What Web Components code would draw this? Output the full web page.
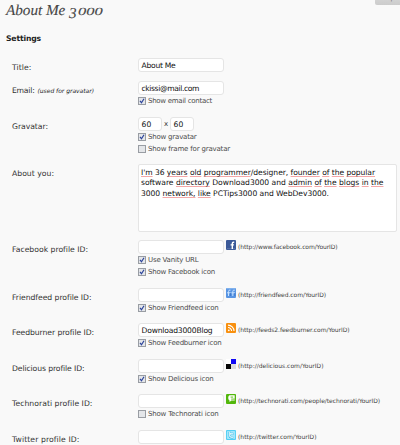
<!DOCTYPE html>
<html lang="en"><head><meta charset="utf-8"><title>About Me 3000</title>
<style>html,body{margin:0;background:#f9f9f9}body{width:400px;height:445px;overflow:hidden;font-family:"DejaVu Sans",sans-serif;color:#333;text-rendering:geometricPrecision}</style></head>
<body><settings-page></settings-page>
<script>
const define=(name,html,init)=>customElements.define(name,class extends HTMLElement{
 connectedCallback(){if(this.shadowRoot)return;const t=document.createElement('template');t.innerHTML=html;
 this.attachShadow({mode:'open'}).append(t.content.cloneNode(true));if(init)init(this,this.shadowRoot);}
});
// A single line of text whose letter spacing is adjusted to fill the width in "w".
define('fit-text','<style>:host{display:inline-block;white-space:pre}span{display:inline-block}</style><span><slot></slot></span>',(el,r)=>{
 const s=r.querySelector('span'),w=parseFloat(el.getAttribute('w'));
 el.style.width=w+'px';
 s.style.letterSpacing=((w-s.getBoundingClientRect().width)/el.textContent.length)+'px';
});
define('form-row',`<style>:host{display:flex;box-sizing:border-box;padding-left:12px}
.label{width:126px;flex:none;font-size:7.7px;line-height:20px;height:20px;white-space:nowrap;color:#333}
.body{flex:1;min-width:0}</style><div class="label"><slot name="label"></slot></div><div class="body"><slot></slot></div>`,el=>{el.style.height=el.getAttribute('h')+'px'});
define('text-box',`<style>:host{display:block;box-sizing:border-box;width:86px;height:14px;border:1px solid #e5e5e5;border-radius:3px;background:#fff;font-size:7.6px;line-height:13px;padding-left:2.5px;white-space:nowrap;color:#111;flex:none}
:host([small]){width:24px}:host([area]){width:259px;height:68px;padding:3px 0 0 2px;border-radius:2px;line-height:10.3px}</style><slot></slot>`);
define('check-box',`<style>:host{display:flex;align-items:center;height:12px;font-size:7px;color:#4c4c4c}svg{width:8px;height:8px;margin-right:2px;flex:none}path{display:none}:host([checked]) path{display:block}
fit-text{line-height:12px}</style><svg viewBox="0 0 8 8"><rect x=".5" y=".5" width="7" height="7" fill="#e4e6e9" stroke="#999da3"/><path d="M2 3.8 3.5 5.8 6 1.8" fill="none" stroke="#2c449b" stroke-width="1.2"/></svg><fit-text></fit-text>`,(el,r)=>{
 const old=r.querySelector('fit-text'),f=document.createElement('fit-text');f.setAttribute('w',el.getAttribute('w'));f.textContent=el.getAttribute('text');old.replaceWith(f);});
const icons={
facebook:'<rect width="10" height="10" rx="1" fill="#3b5998"/><path d="M1 8.6h8" stroke="#627aad" stroke-width=".8"/><path d="M8.2 2.2H7.5Q6.3 2.2 6.3 3.5V9M4.6 4.9h3.3" fill="none" stroke="#fff" stroke-width="1.4"/>',
friendfeed:'<rect width="10" height="10" rx="1" fill="#5995e3"/><path d="M.6.7h8.8" stroke="#8bb9ef"/><path d="M4.5 2.2Q2.5 1.6 2.5 3.5V8M1 4.8h3.7M8.8 2.2Q6.8 1.6 6.8 3.5V8M5.3 4.8h3.6" fill="none" stroke="#c7e2ff"/><path d="M4.5 5v3M8.8 5v3" stroke="#2e6ac0" stroke-width=".6"/>',
feed:'<rect width="10" height="10" rx="1" fill="#f8900f"/><circle cx="2.8" cy="7.3" r=".9" fill="#fff"/><path d="M2 4.5A3.6 3.6 0 0 1 5.6 8.1M2 2.1A6 6 0 0 1 8 8.1" fill="none" stroke="#fff" stroke-width="1.1"/>',
delicious:'<rect width="10" height="10" fill="#fff"/><path d="M5 0h5v5H5z" fill="#1008f4"/><path d="M0 5h5v5H0z" fill="#080808"/><path d="M5 5h5v5H5z" fill="#ddd"/>',
technorati:'<rect width="10" height="10" rx="1" fill="#52b70c"/><path d="M3.4 1.2H8.7V6.6H5.4L3.5 8V6.4Q2.2 5.8 2.2 3.9 2.2 2 3.4 1.2" fill="#fff"/><path d="M4.6 3.1h2.6M5.2 5.1h3.6" fill="none" stroke="#52b70c" stroke-width=".9"/>',
twitter:'<rect width="10" height="10" rx="1" fill="#51cef4"/><rect x=".9" y=".9" width="8.2" height="8.2" rx="1" fill="#a3e7fb"/><path d="M3.8 1.7V6Q3.8 7.6 7.2 7.2M3.8 3.9h3.6" fill="none" stroke="#2bb7e5" stroke-width="2.4"/><path d="M3.8 1.8V6Q3.8 7.3 7.1 7.1M3.8 3.9h3.4" fill="none" stroke="#fff" stroke-width="1.1"/>'};
define('site-icon','<style>:host{display:block;width:10px;height:10px;flex:none}svg{display:block;width:10px;height:10px}</style><svg viewBox="0 0 10 10"></svg>',(el,r)=>{r.querySelector('svg').innerHTML=icons[el.getAttribute('name')]});
const ft=(t,w)=>`<fit-text w="${w}">${t}</fit-text>`;
const label=(t,w)=>`<span slot="label">${ft(t,w)}</span>`;
const chk=(t,w,on=1)=>`<check-box ${on?'checked':''} w="${w}" text="${t}"></check-box>`;
const site=(name,w,h,icon,url,uw,checks,val='')=>`<form-row h="${h}">${label(name+' profile ID:',w)}<div class="line"><text-box>${val}</text-box><site-icon name="${icon}"></site-icon><span class="url">${ft('(http://'+url+')',uw)}</span></div>${checks}</form-row>`;
define('settings-page',`<style>
:host{display:block;position:relative;width:400px;height:445px;overflow:hidden;background:#f9f9f9}
h1{margin:0;padding:1px 0 0 6px;height:19px;font:italic 15.2px/19px "Liberation Serif",serif;color:#464646;white-space:nowrap;display:flex;-webkit-text-stroke:.1px #464646}
/* Old-style figures: the 3 descends below the baseline, the zeros stay at x-height. */
.three{display:inline-block;width:8.5px;padding-top:3px;line-height:19px}
.zeros{display:inline-block;font-size:11px;transform:scaleX(1.5);transform-origin:0 0;line-height:22px}
h2{margin:0;padding:10px 0 0 6px;height:28px;font:bold 7.7px/17px "DejaVu Sans",sans-serif;color:#222}
.line{display:flex;height:14px}.line site-icon{margin:0 0 0 2px}.url{font-size:6px;line-height:16px;color:#444;margin-left:2px}
.small{font-size:6px;font-weight:500;font-style:italic;margin-left:3px;color:#222}
.x{width:8px;text-align:center;font-size:7px;line-height:15px}
u{text-decoration:underline;text-decoration-color:#f4a8a8;text-decoration-thickness:1px;text-underline-offset:1px;text-decoration-skip-ink:none}
.area fit-text{display:block}.help{position:absolute;left:375px;top:-10px;width:32px;height:15px;background:linear-gradient(#ddd,#ccc);border-radius:0 0 2px 2px;font-size:7px;line-height:17px;padding-left:4px;color:#777;box-sizing:border-box}
</style>
<div class="help">Help ▾</div>
<h1>${ft('About Me ',63)}<span class="three">3</span><span class="zeros">000</span></h1><h2>${ft('Settings',35)}</h2>
<form-row h="23">${label('Title:',19.5)}<text-box>${ft('About Me',34)}</text-box></form-row>
<form-row h="36">${label('Email:',22.5)}<span slot="label" class="small">${ft('(used for gravatar)',56.5)}</span><text-box>${ft('ckissi@mail.com',57.5)}</text-box>${chk('Show email contact',64)}</form-row>
<form-row h="47">${label('Gravatar:',36)}<div class="line"><text-box small>${ft('60',10)}</text-box><span class="x">x</span><text-box small>${ft('60',10)}</text-box></div>${chk('Show gravatar',48.5)}${chk('Show frame for gravatar',82,0)}</form-row>
<form-row h="76">${label('About you:',42)}<text-box area class="area">${ft("<u>I'm</u> 36 <u>years</u> <u>old</u> <u>programmer</u>/designer, <u>founder</u> <u>of</u> <u>the</u> <u>popular</u>",234)}${ft('software <u>directory</u> Download3000 and <u>admin</u> <u>of</u> <u>the</u> <u>blogs</u> <u>in</u> <u>the</u>',242.5)}${ft('3000 <u>network,</u> <u>like</u> PCTips3000 and WebDev3000.',188)}</text-box></form-row>
${site('Facebook',76,48,'facebook','www.facebook.com/YourID',99.5,chk('Use Vanity URL',50.5)+chk('Show Facebook icon',67))}
${site('Friendfeed',79.5,35,'friendfeed','friendfeed.com/YourID',88,chk('Show Friendfeed icon',70.5))}
${site('Feedburner',82,36,'feed','feeds2.feedburner.com/YourID',111.5,chk('Show Feedburner icon',73.5),ft('Download3000Blog',71))}
${site('Delicious',72.5,35,'delicious','delicious.com/YourID',85.5,chk('Show Delicious icon',65.5))}
${site('Technorati',80.5,36,'technorati','technorati.com/people/technorati/YourID',142,chk('Show Technorati icon',70.5,0))}
${site('Twitter',67.5,30,'twitter','twitter.com/YourID',78.5,'')}
`);
</script></body></html>
